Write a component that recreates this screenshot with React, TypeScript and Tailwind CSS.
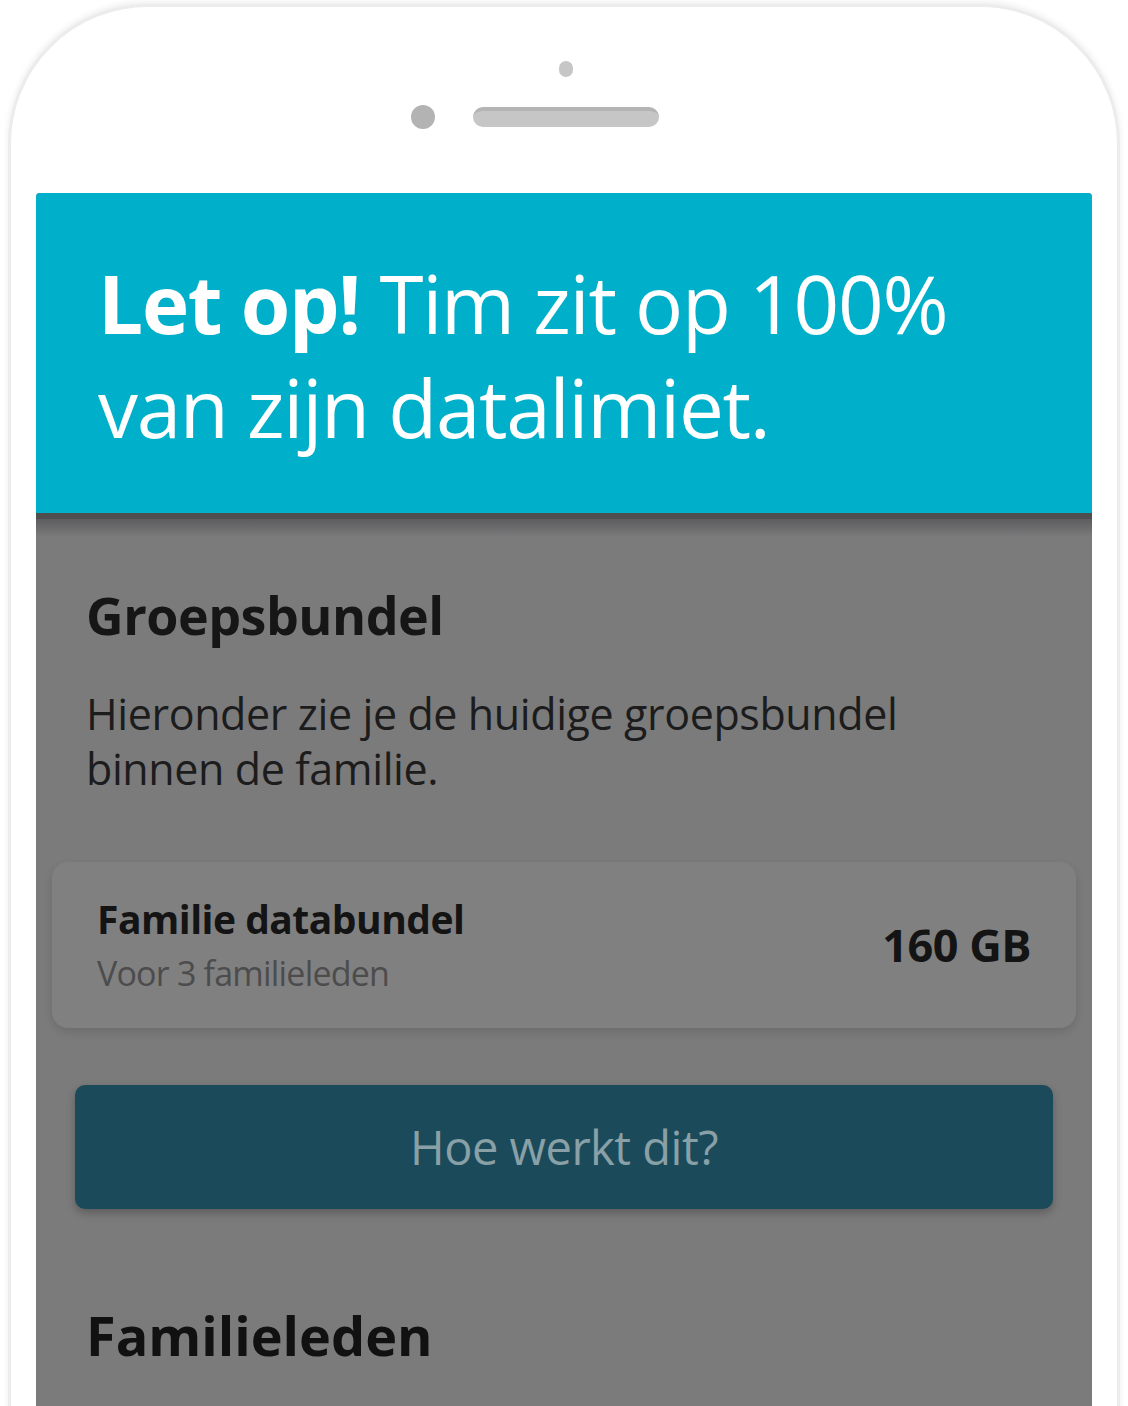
import React from "react";

export default function App() {
  return (
    <div className="w-[1128px] h-[1406px] overflow-hidden bg-white" style={{ fontFamily: '"Open Sans", "Noto Sans", sans-serif' }}>
      <div className="relative mx-[8px] mt-[4px] h-[1460px] rounded-t-[140px] border-[3px] border-[#ececec] bg-white shadow-[0_-2px_6px_rgba(0,0,0,0.08)]">
        {/* top bezel */}
        <div className="flex h-[186px] flex-col items-center">
          <div className="mt-[54px] ml-[4px] h-[16px] w-[14px] rounded-full bg-[#c6c6c6]" />
          <div className="mt-[28px] flex items-center gap-[38px] pr-[58px]">
            <div className="h-[24px] w-[24px] rounded-full bg-[#b3b3b3]" />
            <div className="h-[20px] w-[186px] rounded-full border-t-[4px] border-[#b4b4b4] bg-[#c6c6c6]" />
          </div>
        </div>
        {/* screen */}
        <div className="mx-[25px] flex flex-col overflow-hidden rounded-t-[4px] bg-[#7b7b7c]">
          <div className="relative bg-[#00b0ca] px-[62px] pt-[58px] pb-[54px] text-white">
            <p className="text-[80px] leading-[104px] tracking-[-1.3px]">
              <span className="font-bold">Let op!</span> Tim zit op 100% van zijn datalimiet.
            </p>
          </div>
          <div className="h-[6px] bg-[#4f4d4f]" />
          <div className="h-[18px] bg-gradient-to-b from-[#5d5c5e] to-[#7b7b7c]" />
          <div className="flex flex-col px-[50px] pt-[43px]">
            <h2 className="text-[52px] font-bold leading-[70px] tracking-[-0.5px] text-[#161616]">Groepsbundel</h2>
            <p className="mt-[36px] max-w-[870px] text-[43px] leading-[55px] text-[#1c1c1c] tracking-[-0.4px]">
              Hieronder zie je de huidige groepsbundel binnen de familie.
            </p>
          </div>
          <div className="mx-[16px] mt-[66px] flex items-center justify-between rounded-[16px] bg-[#808081] px-[45px] py-[34px] shadow-[0_4px_10px_rgba(0,0,0,0.12)]">
            <div className="flex flex-col">
              <span className="text-[39px] font-bold leading-[46px] text-[#141414] tracking-[-0.5px]">Familie databundel</span>
              <span className="mt-[10px] text-[34px] leading-[42px] text-[#4c4c4d] tracking-[-0.8px]">Voor 3 familieleden</span>
            </div>
            <span className="text-[45px] font-bold leading-[50px] text-[#141414] tracking-[-0.5px]">160 GB</span>
          </div>
          <div className="mx-[39px] mt-[57px] flex h-[124px] items-center justify-center rounded-[10px] bg-[#1b4b5a] shadow-[0_4px_8px_rgba(0,0,0,0.25)]">
            <span className="text-[47px] font-medium leading-[50px] text-[#8aa0a7] tracking-[-0.5px]">Hoe werkt dit?</span>
          </div>
          <div className="px-[50px] pt-[94px] pb-[200px]">
            <h2 className="text-[54px] font-bold leading-[64px] text-[#111111]">Familieleden</h2>
          </div>
        </div>
      </div>
    </div>
  );
}
